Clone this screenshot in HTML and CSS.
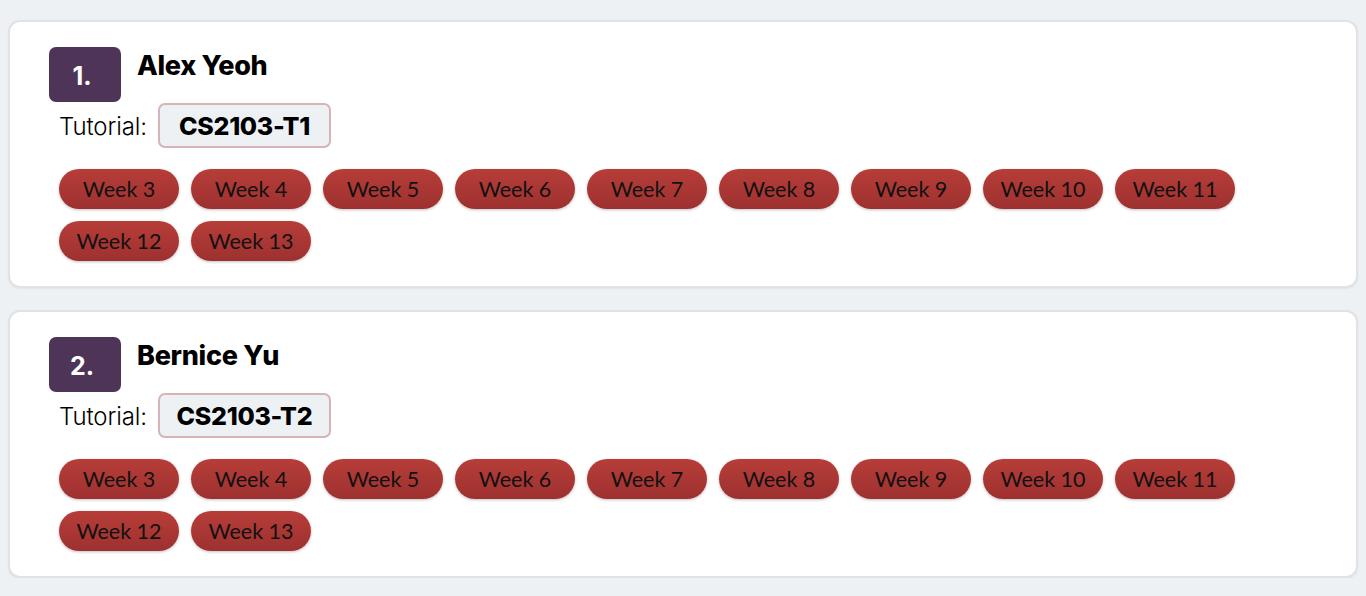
FILE: index.html
```html
<!DOCTYPE html>
<html>
<head>
<meta charset="utf-8">
<link rel="stylesheet" href="styles.css">
</head>
<body>
<div class="list">
  <div class="card">
    <div class="head">
      <div class="num">1.</div>
      <div class="name">Alex Yeoh</div>
    </div>
    <div class="tut">
      <span class="tut-label">Tutorial:</span>
      <span class="tut-box">CS2103-T1</span>
    </div>
    <div class="weeks">
      <span class="pill">Week 3</span><span class="pill">Week 4</span><span class="pill">Week 5</span><span class="pill">Week 6</span><span class="pill">Week 7</span><span class="pill">Week 8</span><span class="pill">Week 9</span><span class="pill">Week 10</span><span class="pill">Week 11</span><span class="pill">Week 12</span><span class="pill">Week 13</span>
    </div>
  </div>
  <div class="card">
    <div class="head">
      <div class="num">2.</div>
      <div class="name">Bernice Yu</div>
    </div>
    <div class="tut">
      <span class="tut-label">Tutorial:</span>
      <span class="tut-box">CS2103-T2</span>
    </div>
    <div class="weeks">
      <span class="pill">Week 3</span><span class="pill">Week 4</span><span class="pill">Week 5</span><span class="pill">Week 6</span><span class="pill">Week 7</span><span class="pill">Week 8</span><span class="pill">Week 9</span><span class="pill">Week 10</span><span class="pill">Week 11</span><span class="pill">Week 12</span><span class="pill">Week 13</span>
    </div>
  </div>
</div>
</body>
</html>
```

FILE: styles.css
```css
html, body {
  margin: 0;
  padding: 0;
  background: #eef1f4;
}
body {
  font-family: "Lato", "Liberation Sans", sans-serif;
  color: #000;
}
.list {
  display: flex;
  flex-direction: column;
  gap: 22px;
  padding: 20px 8px 0 8px;
}
.card {
  background: #fff;
  border: 2px solid #e0e2e5;
  border-radius: 12px;
  height: 268px;
  box-sizing: border-box;
  padding: 25px 0 0 39px;
  box-shadow: 0 1px 2px rgba(0,0,0,0.05);
}
.head {
  display: flex;
  align-items: flex-start;
  gap: 16px;
}
.num {
  width: 72px;
  height: 55px;
  background: #4e3557;
  border-radius: 7px;
  color: #fff;
  font-family: "Inter", "Lato", sans-serif;
  font-weight: 700;
  font-size: 25px;
  display: flex;
  align-items: center;
  justify-content: center;
  padding: 3px 6px 0 0;
  box-sizing: border-box;
}
.name {
  font-family: "Inter", "Lato", sans-serif;
  font-weight: 800;
  font-size: 27px;
  line-height: 32px;
  margin-top: 3px;
  letter-spacing: -0.3px;
}
.tut {
  display: flex;
  align-items: center;
  gap: 11px;
  margin-top: 1px;
  padding-left: 10px;
}
.tut-label {
  font-family: "Inter", "Lato", sans-serif;
  font-weight: 300;
  font-size: 24px;
  letter-spacing: -0.1px;
  padding-top: 1px;
}
.tut-box {
  display: inline-flex;
  align-items: center;
  justify-content: center;
  width: 173px;
  height: 45px;
  box-sizing: border-box;
  background: #eef1f4;
  border: 2px solid #d7b3b5;
  border-radius: 7px;
  font-family: "Inter", "Lato", sans-serif;
  font-weight: 800;
  font-size: 25px;
  letter-spacing: -0.3px;
}
.weeks {
  display: flex;
  flex-wrap: wrap;
  gap: 12px;
  margin-top: 21px;
  padding-left: 10px;
  max-width: 1190px;
}
.pill {
  width: 120px;
  height: 40px;
  box-sizing: border-box;
  border-radius: 20px;
  background: linear-gradient(#b73d38, #9d3130);
  box-shadow: 0 1px 3px rgba(0,0,0,0.25);
  display: flex;
  align-items: center;
  justify-content: center;
  font-size: 21.5px;
  color: #111;
}
```
